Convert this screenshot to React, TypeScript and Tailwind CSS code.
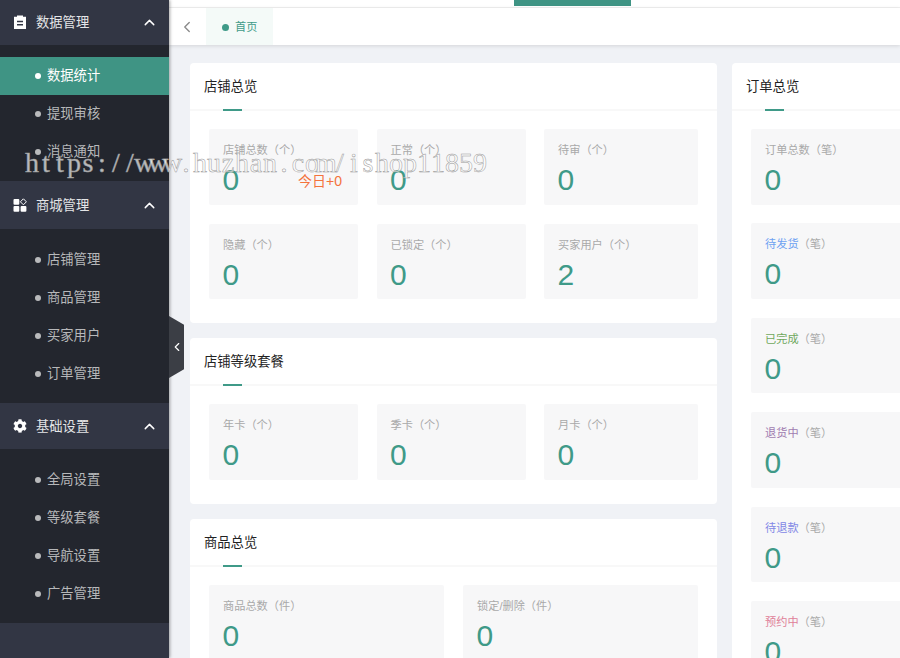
import { ChevronLeft, ChevronUp } from "lucide-react";
import { FaCog } from "react-icons/fa";
import type { ReactNode } from "react";

const font = "font-['Liberation_Sans','Noto_Sans_CJK_SC',sans-serif]";
const watermark = "https://www.huzhan.com/ishop11859";

function ClipIcon() {
  return (
    <svg width="14" height="14" viewBox="0 0 14 14" fill="#fff">
      <path fillRule="evenodd" d="M4 1.800V.5h6v1.300h3V14H1V1.800zM4 5.800v1.400h6V5.800zm0 3.200v1.400h6V9z" />
    </svg>
  );
}

function ShopIcon() {
  return (
    <svg width="14" height="14" viewBox="0 0 14 14" fill="#fff">
      <rect x="0.500" y="1" width="5.800" height="5.800" rx="1" />
      <rect x="0.500" y="8" width="5.800" height="5.800" rx="1" />
      <rect x="7.600" y="8" width="5.800" height="5.800" rx="1" />
      <path d="M10.400.8l3 3-3 3-3-3z" fill="none" stroke="#fff" strokeWidth="1" />
    </svg>
  );
}

const menu: { title: string; icon: ReactNode; items: string[]; cls: string; subCls: string }[] = [
  {
    title: "数据管理",
    icon: <ClipIcon />,
    items: ["数据统计", "提现审核", "消息通知"],
    cls: "h-[48px] -mt-[3px] pt-[2px]",
    subCls: "pt-3 pb-[10px]",
  },
  {
    title: "商城管理",
    icon: <ShopIcon />,
    items: ["店铺管理", "商品管理", "买家用户", "订单管理"],
    cls: "h-[48px]",
    subCls: "pt-[12px] pb-[10px]",
  },
  {
    title: "基础设置",
    icon: <FaCog size={14} color="#fff" />,
    items: ["全局设置", "等级套餐", "导航设置", "广告管理"],
    cls: "h-[46px]",
    subCls: "pt-[12px] pb-[10px]",
  },
];

function Sidebar() {
  return (
    <aside className="w-[169px] shrink-0 bg-[#323644] flex flex-col shadow-[1px_0_3px_rgba(0,0,0,0.35)] z-10">
      {menu.map((g) => (
        <div key={g.title}>
          <div className={`flex items-center pl-[13px] pr-[11px] text-[13.300px] text-[#e4e5e7] ${g.cls}`}>
            <span className="w-[14px] flex justify-center">{g.icon}</span>
            <span className="ml-[9px] flex-1 pt-[2px]">{g.title}</span>
            <ChevronUp size={17} color="#fff" strokeWidth={2} />
          </div>
          <div className={`bg-[#23262e] ${g.subCls}`}>
            {g.items.map((t) => (
              <div
                key={t}
                className={`h-[38px] flex items-center pl-[35px] text-[13.300px] ${
                  t === "数据统计" ? "bg-[#3f9484] text-white" : "text-[#b7b8ba]"
                }`}
              >
                <span
                  className={`w-[6px] h-[6px] rounded-full mr-[6px] ${
                    t === "数据统计" ? "bg-white" : "bg-[#b9babc]"
                  }`}
                />
                {t}
              </div>
            ))}
          </div>
        </div>
      ))}
    </aside>
  );
}

function Stat({
  label,
  unit,
  value,
  color,
  extra,
}: {
  label: string;
  unit: string;
  value: number;
  color?: string;
  extra?: string;
}) {
  return (
    <div className="relative h-[75.500px] bg-[#f7f7f8] rounded-[2px] pl-[14px] pt-[13px]">
      <p className="text-[11.200px] leading-[17px] text-[#a9a9a9]">
        <span className={color}>{label}</span>（{unit}）
      </p>
      <p className="text-[30px] leading-[34px] mt-[4px] -ml-[0.500px] text-[#3f9a88]">{value}</p>
      {extra && (
        <span className="absolute left-[89px] top-[44px] text-[14px] leading-[16px] text-[#f4733c]">{extra}</span>
      )}
    </div>
  );
}

function Card({ title, className, children }: { title: string; className?: string; children: ReactNode }) {
  return (
    <section className={`bg-white rounded-[4px] ${className ?? ""}`}>
      <header className="relative h-[48px] border-b-2 border-[#f8f8f8] pl-[14px] pt-[15px] text-[13.300px] leading-[18px] text-[#222]">
        {title}
        <span className="absolute left-[33px] bottom-[-2px] w-[19px] h-[2px] bg-[#3f9a88]" />
      </header>
      {children}
    </section>
  );
}

export default function App() {
  return (
    <div className={`relative w-[900px] h-[658px] overflow-hidden flex bg-[#f0f2f6] ${font}`}>
      <Sidebar />

      {/* collapse handle */}
      <div className="absolute left-[169px] top-[316px] z-10 w-[15px] h-[62px] bg-[#3b3e45] [clip-path:polygon(0_0,100%_14%,100%_86%,0_100%)] flex items-center justify-center">
        <ChevronLeft size={14} color="#fff" strokeWidth={2} />
      </div>

      <main className="flex-1 min-w-0 flex flex-col">
        <div className="h-[8px] shrink-0 bg-white border-b border-[#f0f0f0] pl-[345px]">
          <div className="w-[117px] h-[6px] bg-[#3f9484]" />
        </div>
        <div className="h-[37px] shrink-0 bg-white flex shadow-[0_1px_4px_rgba(0,0,0,0.12)]">
          <div className="w-[37px] flex items-center justify-center pt-[1px] -ml-[1px]">
            <ChevronLeft size={18} color="#8a8a8a" strokeWidth={1.800} />
          </div>
          <div className="w-[67px] ml-[1px] bg-[#f4faf8] flex items-center pl-[16px] pt-[1px] text-[11.200px] text-[#3f9a88]">
            <span className="w-[7px] h-[7px] rounded-full bg-[#3f9a88] mr-[6px]" />
            首页
          </div>
        </div>

        <div className="flex pl-[21px] pt-[18px] gap-[15px]">
          <div className="w-[527px] shrink-0 flex flex-col gap-[15px]">
            <Card title="店铺总览" className="h-[260px]">
              <div className="grid grid-cols-[149px_149px_154px] gap-x-[18.500px] gap-y-[19px] pl-[19px] pt-[18px]">
                <Stat label="店铺总数" unit="个" value={0} extra="今日+0" />
                <Stat label="正常" unit="个" value={0} />
                <Stat label="待审" unit="个" value={0} />
                <Stat label="隐藏" unit="个" value={0} />
                <Stat label="已锁定" unit="个" value={0} />
                <Stat label="买家用户" unit="个" value={2} />
              </div>
            </Card>
            <Card title="店铺等级套餐" className="h-[166px]">
              <div className="grid grid-cols-[149px_149px_154px] gap-x-[18.500px] pl-[19px] pt-[18px]">
                <Stat label="年卡" unit="个" value={0} />
                <Stat label="季卡" unit="个" value={0} />
                <Stat label="月卡" unit="个" value={0} />
              </div>
            </Card>
            <Card title="商品总览" className="h-[166px]">
              <div className="grid grid-cols-[235px_235px] gap-x-[19px] pl-[19px] pt-[18px]">
                <Stat label="商品总数" unit="件" value={0} />
                <Stat label="锁定/删除" unit="件" value={0} />
              </div>
            </Card>
          </div>

          <Card title="订单总览" className="w-[400px] shrink-0 h-[640px]">
            <div className="flex flex-col gap-[18.900px] pl-[19px] pr-[19px] pt-[18px]">
              <Stat label="订单总数" unit="笔" value={0} />
              <Stat label="待发货" unit="笔" value={0} color="text-[#6ea2f2]" />
              <Stat label="已完成" unit="笔" value={0} color="text-[#6fa85c]" />
              <Stat label="退货中" unit="笔" value={0} color="text-[#a07cb0]" />
              <Stat label="待退款" unit="笔" value={0} color="text-[#8288e6]" />
              <Stat label="预约中" unit="笔" value={0} color="text-[#e08098]" />
            </div>
          </Card>
        </div>
      </main>

      {/* watermark baked into the shot, each glyph on a 14px cell */}
      <div className="absolute left-[25px] top-[147px] z-20 flex font-['Liberation_Serif',serif] text-[28px] leading-[32px] text-white/70 [-webkit-text-stroke:0.500px_#999999] pointer-events-none">
        {watermark.split("").map((c, i) => (
          <span key={i} className="w-[14px] flex justify-center">
            {c}
          </span>
        ))}
      </div>
    </div>
  );
}
